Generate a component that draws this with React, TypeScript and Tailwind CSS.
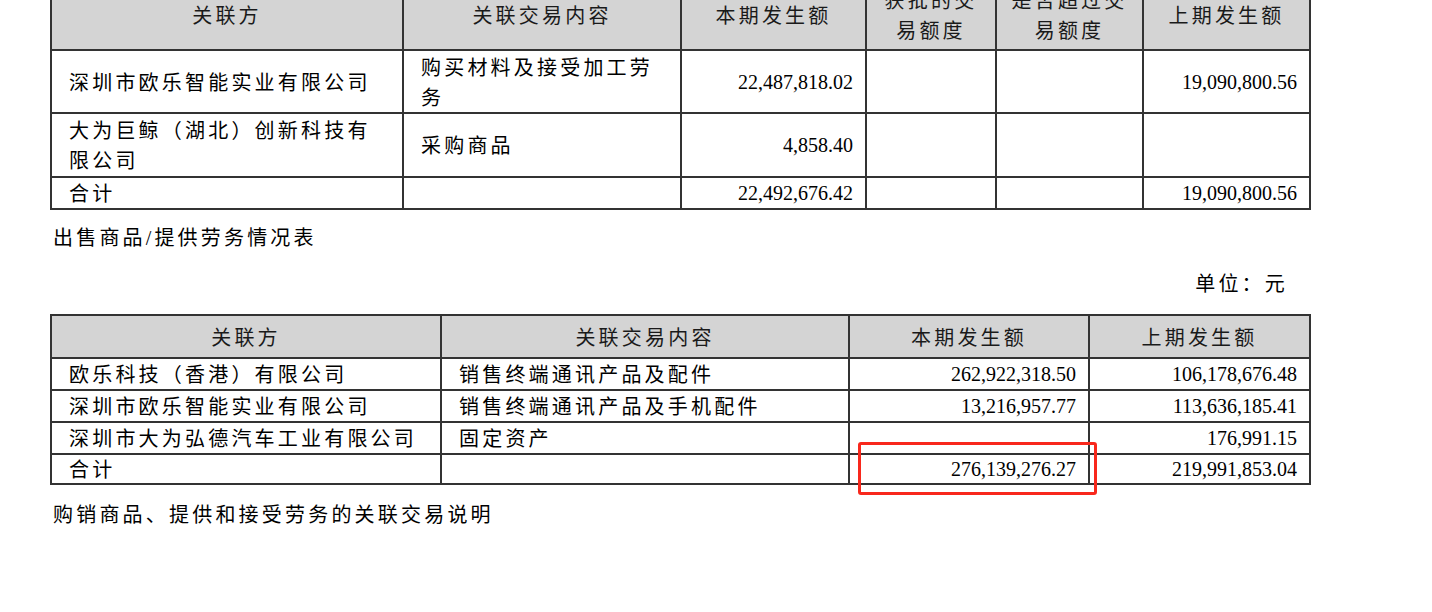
import React from "react"

const cjk = "font-['Noto_Sans_CJK_SC',sans-serif] tracking-[3.2px]"
const num = "font-['Liberation_Serif',serif] text-right pr-[12px] whitespace-nowrap"
const cell = "border-2 border-[#333] align-middle p-0 leading-[30px]"
const cellTight = "border-2 border-[#333] align-middle p-0 leading-[26px]"

type PurchaseRow = { party: React.ReactNode; content: React.ReactNode; amount: string; last: string; h: string }

const purchases: PurchaseRow[] = [
  {
    party: "深圳市欧乐智能实业有限公司",
    content: <>购买材料及接受加工劳<br />务</>,
    amount: "22,487,818.02",
    last: "19,090,800.56",
    h: "h-[63px]",
  },
  {
    party: <>大为巨鲸（湖北）创新科技有<br />限公司</>,
    content: "采购商品",
    amount: "4,858.40",
    last: "",
    h: "h-[64px]",
  },
  { party: "合计", content: "", amount: "22,492,676.42", last: "19,090,800.56", h: "h-[31px]" },
]

const sales = [
  { party: "欧乐科技（香港）有限公司", content: "销售终端通讯产品及配件", amount: "262,922,318.50", last: "106,178,676.48" },
  { party: "深圳市欧乐智能实业有限公司", content: "销售终端通讯产品及手机配件", amount: "13,216,957.77", last: "113,636,185.41" },
  { party: "深圳市大为弘德汽车工业有限公司", content: "固定资产", amount: "", last: "176,991.15" },
  { party: "合计", content: "", amount: "276,139,276.27", last: "219,991,853.04" },
]

export default function App() {
  return (
    <div className="min-h-[612px] w-[1432px] overflow-hidden bg-white text-[20px] text-black">
      <div className="ml-[50px] w-[1259px]">
        <table className="-mt-[21px] w-[1259px] table-fixed border-collapse">
          <colgroup>
            <col className="w-[352px]" />
            <col className="w-[278px]" />
            <col className="w-[185px]" />
            <col className="w-[130px]" />
            <col className="w-[147px]" />
            <col className="w-[167px]" />
          </colgroup>
          <thead>
            <tr className="bg-[#d4d4d4] text-[#1a1a1a]">
              <th className={`${cell} ${cjk} h-[70px] text-center font-normal`}>关联方</th>
              <th className={`${cell} ${cjk} text-center font-normal`}>关联交易内容</th>
              <th className={`${cell} ${cjk} text-center font-normal`}>本期发生额</th>
              <th className={`${cell} ${cjk} text-center font-normal`}>获批的交<br />易额度</th>
              <th className={`${cell} ${cjk} text-center font-normal`}>是否超过交<br />易额度</th>
              <th className={`${cell} ${cjk} text-center font-normal`}>上期发生额</th>
            </tr>
          </thead>
          <tbody>
            {purchases.map((r, i) => (
              <tr key={i}>
                <td className={`${cell} ${cjk} ${r.h} whitespace-nowrap pl-[17px]`}>{r.party}</td>
                <td className={`${cell} ${cjk} whitespace-nowrap pl-[17px]`}>{r.content}</td>
                <td className={`${cell} ${num}`}>{r.amount}</td>
                <td className={cell}></td>
                <td className={cell}></td>
                <td className={`${cell} ${num}`}>{r.last}</td>
              </tr>
            ))}
          </tbody>
        </table>
      </div>

      <p className={`${cjk} ml-[53px] mt-[12px] leading-[30px]`}>
        出售商品<span className="font-['Liberation_Serif',serif] tracking-[3px]">/</span>提供劳务情况表
      </p>

      <div className="mt-[15px] flex w-[1309px] justify-end pr-[21px]">
        <span className={`${cjk} leading-[30px]`}>单位：元</span>
      </div>

      <div className="relative ml-[50px] mt-[16px] w-[1259px]">
        <table className="w-[1259px] table-fixed border-collapse">
          <colgroup>
            <col className="w-[390px]" />
            <col className="w-[408px]" />
            <col className="w-[240px]" />
            <col className="w-[221px]" />
          </colgroup>
          <thead>
            <tr className="bg-[#d4d4d4] text-[#1a1a1a]">
              <th className={`${cellTight} ${cjk} h-[43px] text-center font-normal`}>关联方</th>
              <th className={`${cellTight} ${cjk} text-center font-normal`}>关联交易内容</th>
              <th className={`${cellTight} ${cjk} text-center font-normal`}>本期发生额</th>
              <th className={`${cellTight} ${cjk} text-center font-normal`}>上期发生额</th>
            </tr>
          </thead>
          <tbody>
            {sales.map((r, i) => (
              <tr key={i}>
                <td className={`${cellTight} ${cjk} ${i === 3 ? "h-[30px]" : "h-[32px]"} whitespace-nowrap pl-[17px]`}>{r.party}</td>
                <td className={`${cellTight} ${cjk} whitespace-nowrap pl-[17px]`}>{r.content}</td>
                <td className={`${cellTight} ${num}`}>{r.amount}</td>
                <td className={`${cellTight} ${num}`}>{r.last}</td>
              </tr>
            ))}
          </tbody>
        </table>
        {/* highlight box over the total */}
        <div className="pointer-events-none absolute left-[808px] top-[128px] h-[53px] w-[239px] rounded-[3px] border-[3px] border-[#f8281c]" />
      </div>

      <p className={`${cjk} ml-[53px] mt-[14px] leading-[30px]`}>购销商品、提供和接受劳务的关联交易说明</p>
    </div>
  )
}
